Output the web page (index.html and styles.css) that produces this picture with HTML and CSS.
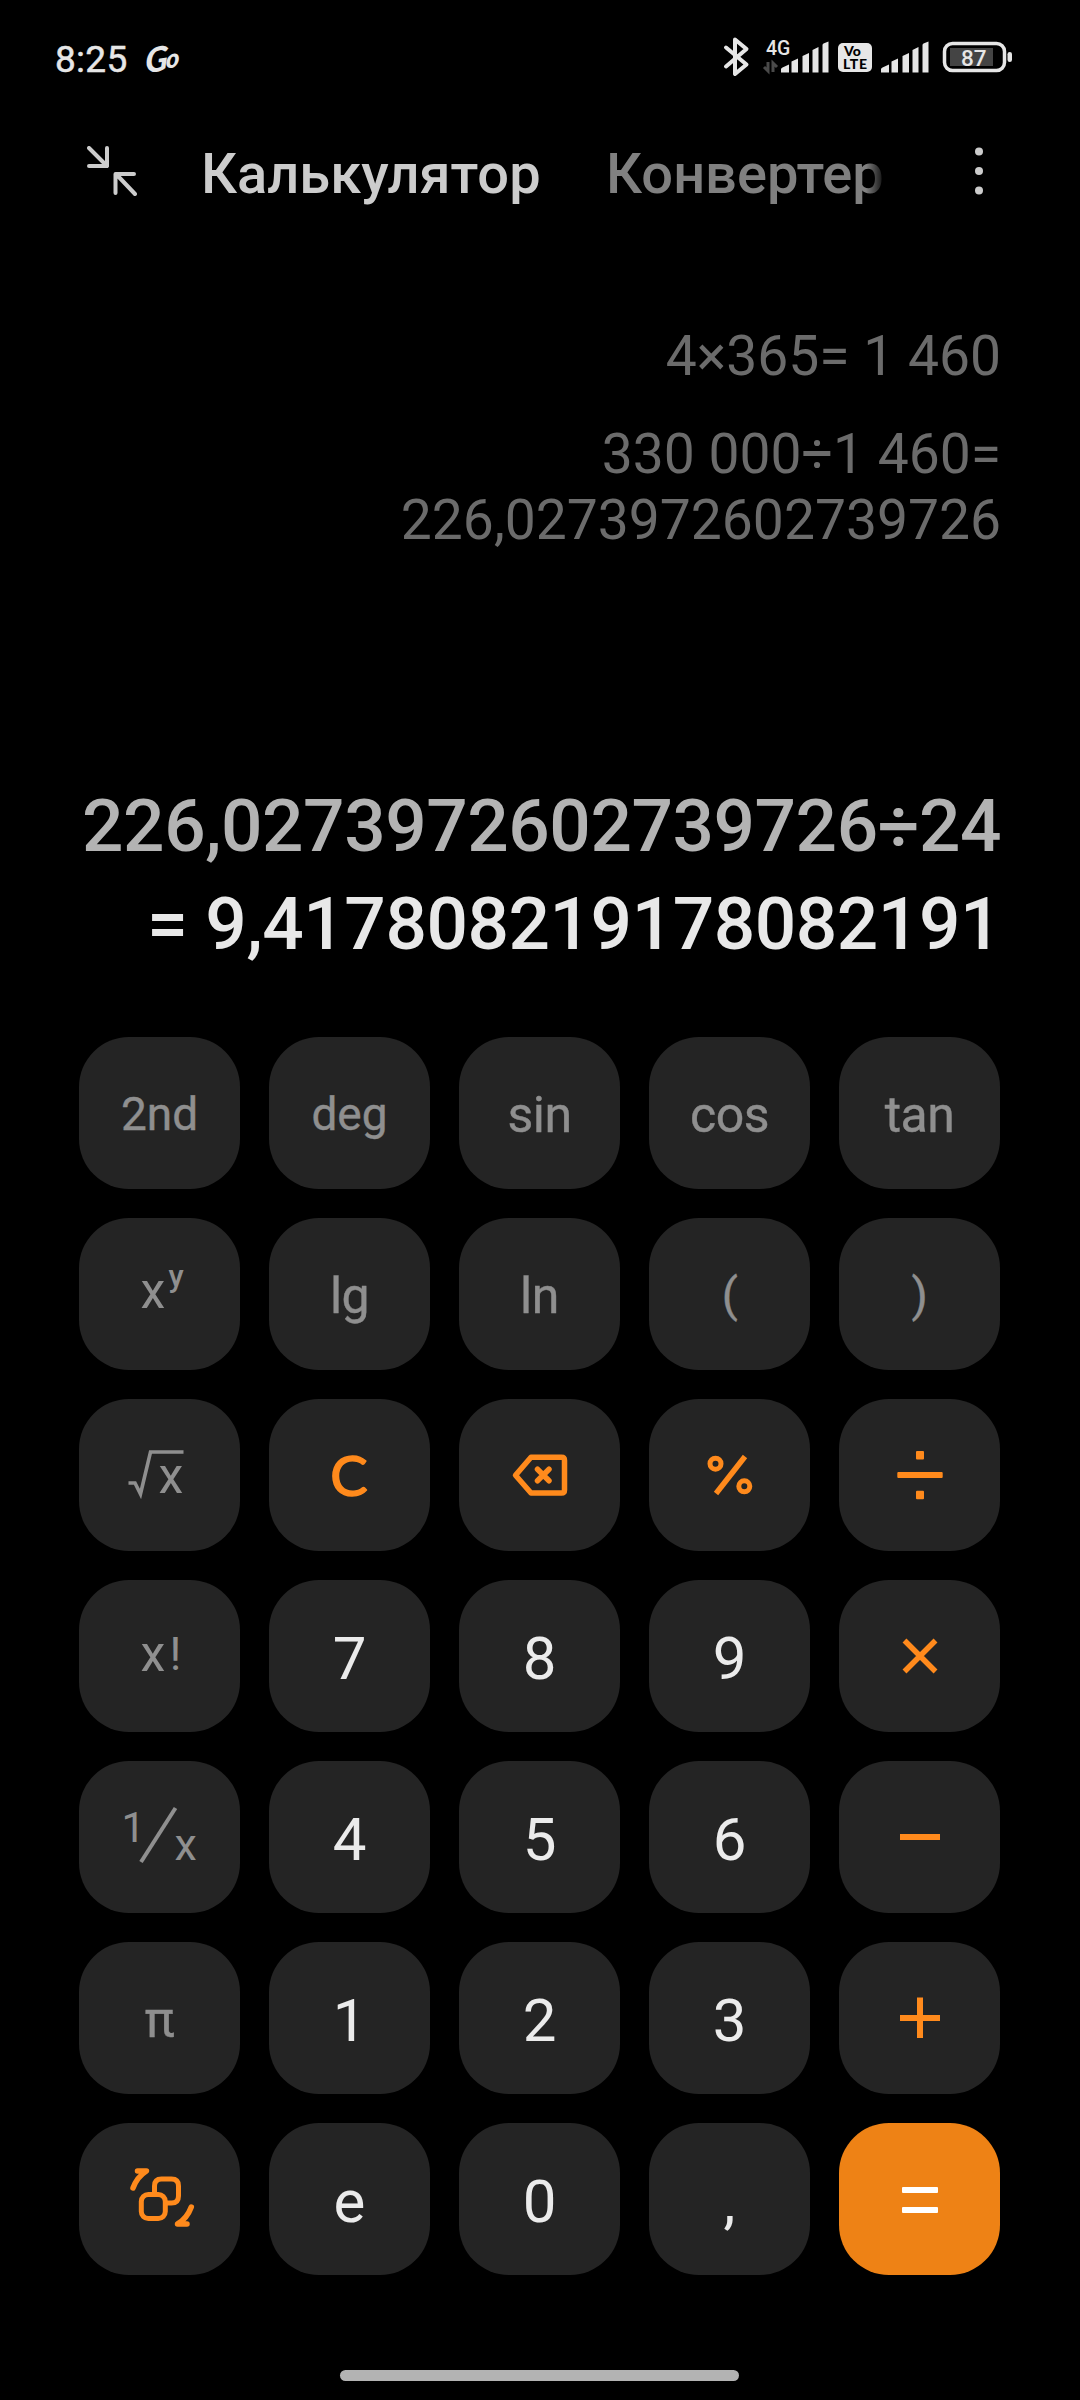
FILE: index.html
```html
<!DOCTYPE html>
<html lang="ru">
<head>
<meta charset="UTF-8">
<meta name="viewport" content="width=device-width,initial-scale=1">
<title>Калькулятор</title>
<link rel="stylesheet" href="styles.css">
</head>
<body>
<div class="screen">
  <div class="status">
    <span class="time">8:25</span>
    <svg class="go" width="48" height="50" viewBox="0 0 48 50">
      <g transform="rotate(-8 18 27) skewX(-10)">
        <text x="7" y="39" class="go-g">G</text>
        <text x="28" y="37" class="go-o">o</text>
      </g>
    </svg>
    <svg class="indicators" width="292" height="44" viewBox="722 35 292 44">
      <path class="bt" d="M726 47.500L746.500 64.500L735 74V39.500L746.500 49L726 66.500"/>
      <text x="766" y="55" class="net">4G</text>
      <path class="data" d="M768 62v9l-4-4M773 72v-9l4 4"/>
      <g id="bars" class="bars">
        <path d="M781 72.500v-3q0-1.500 1.500-2l6.500-3v8zM791.500 72.500V61.500l6.500-3v14zM802.500 72.500V56l6.500-3v19.500zM812.500 72.500V50l6-3v25.500zM822.500 72.500V45q0-1 1-1.500l5-2v31z"/>
      </g>
      <use href="#bars" x="100"/>
      <rect x="838" y="43" width="34" height="29" rx="5" class="bars"/>
      <text x="844" y="56" class="lte">Vo</text>
      <text x="843" y="69" class="lte" textLength="24">LTE</text>
      <rect x="944.500" y="43.500" width="60" height="27" rx="8" class="bat"/>
      <rect x="950" y="48" width="43" height="18" class="level"/>
      <rect x="1007.500" y="52" width="4.500" height="10" rx="2.200" class="bars"/>
      <text x="961" y="65.500" class="pct">87</text>
    </svg>
  </div>

  <div class="header">
    <svg class="collapse" width="50" height="50" viewBox="0 0 50 50">
      <path d="M2 2L20 20M20 2V20H2M48 48L29.500 28.500M28.500 47V28H47"/>
    </svg>
    <div class="tab active">Калькулятор</div>
    <div class="tab next">Конвертер</div>
    <svg class="more" width="10" height="48" viewBox="0 0 10 48">
      <circle cx="5" cy="4.500" r="4"/><circle cx="5" cy="24" r="4"/><circle cx="5" cy="43.500" r="4"/>
    </svg>
  </div>

  <div class="history">
    <div class="entry">4×365= 1 460</div>
    <div class="entry">330 000÷1 460=<br>226,0273972602739726</div>
  </div>

  <div class="current">
    <div class="expr">226,0273972602739726÷24</div>
    <div class="result">= 9,417808219178082191</div>
  </div>

  <div class="keypad">
    <div class="key fn small">2nd</div>
    <div class="key fn small">deg</div>
    <div class="key fn">sin</div>
    <div class="key fn">cos</div>
    <div class="key fn">tan</div>

    <div class="key"><svg viewBox="0 0 161 152"><text x="61.500" y="90" class="t50">x</text><text x="89.500" y="68.500" class="t30">y</text></svg></div>
    <div class="key fn">lg</div>
    <div class="key fn">ln</div>
    <div class="key fn paren">(</div>
    <div class="key fn paren">)</div>

    <div class="key"><svg viewBox="0 0 161 152"><path class="root" d="M49.500 84H56L61.500 95L71.500 53H104.500"/><text x="79.500" y="94.300" class="t50">x</text></svg></div>
    <div class="key"><svg viewBox="0 0 161 152"><text x="80" y="96.500" class="clear" text-anchor="middle">C</text></svg></div>
    <div class="key"><svg viewBox="0 0 161 152">
      <path class="op round" d="M72 58.300H102.500Q105.500 58.300 105.500 61.300V91Q105.500 94 102.500 94H72L56.500 76.200ZM78.500 70.200L90 81.800M90 70.200L78.500 81.800"/>
    </svg></div>
    <div class="key"><svg viewBox="0 0 161 152">
      <circle class="op sq" cx="66.500" cy="64.700" r="5.500"/><circle class="op sq" cx="95.300" cy="87.300" r="5.500"/>
      <path class="op" d="M96 57.500L67 94.500"/>
    </svg></div>
    <div class="key"><svg viewBox="0 0 161 152">
      <rect class="fill" x="58.300" y="73" width="45.400" height="6" rx="1"/>
      <rect class="fill" x="77" y="52" width="8" height="8.500" rx="1"/><rect class="fill" x="77" y="91.700" width="8" height="8.500" rx="1"/>
    </svg></div>

    <div class="key"><svg viewBox="0 0 161 152"><text x="61.500" y="90.700" class="t50">x</text><text x="90.500" y="90" class="t46">!</text></svg></div>
    <div class="key num">7</div>
    <div class="key num">8</div>
    <div class="key num">9</div>
    <div class="key"><svg viewBox="0 0 161 152"><path class="op" d="M65.500 60.500L96.500 91.500M96.500 60.500L65.500 91.500"/></svg></div>

    <div class="key"><svg viewBox="0 0 161 152">
      <text x="42.500" y="80.500" class="t42">1</text><path class="slash" d="M96.500 47L62 101"/><text x="95.500" y="98.500" class="t45">x</text>
    </svg></div>
    <div class="key num">4</div>
    <div class="key num">5</div>
    <div class="key num">6</div>
    <div class="key"><svg viewBox="0 0 161 152"><rect class="fill" x="61" y="73" width="40" height="6"/></svg></div>

    <div class="key fn">π</div>
    <div class="key num">1</div>
    <div class="key num">2</div>
    <div class="key num">3</div>
    <div class="key"><svg viewBox="0 0 161 152"><rect class="fill" x="61" y="73" width="40" height="6"/><rect class="fill" x="78" y="55.500" width="6" height="40.500"/></svg></div>

    <div class="key"><svg viewBox="0 0 161 152">
      <rect class="op sq" x="62.300" y="71.500" width="24" height="24" rx="7"/>
      <path class="op sq" d="M75.500 71V63Q75.500 56 82.500 56H92.500Q99.500 56 99.500 63V73Q99.500 80 92.500 80H87"/>
      <path class="op round" d="M58.500 48H67.500Q58 54 54 65M108 101H98.500Q108 95.500 112.300 84"/>
    </svg></div>
    <div class="key num">e</div>
    <div class="key num">0</div>
    <div class="key num">,</div>
    <div class="key equals"><svg viewBox="0 0 161 152"><rect x="63" y="64" width="36" height="6" rx="1"/><rect x="63" y="84" width="36" height="6" rx="1"/></svg></div>
  </div>

  <div class="homebar"></div>
</div>
</body>
</html>
```

FILE: styles.css
```css
:root{--key:#242424;--sub:#8f8f8f;--orange:#ff8a1c;--light:#e6e6e6}
*{box-sizing:border-box;margin:0;padding:0}
body{background:#000;font-family:Roboto,"Noto Sans",sans-serif}
.screen{width:1080px;height:2400px;overflow:hidden;display:flex;flex-direction:column}

/* status bar */
.status{height:114px;display:flex;align-items:center;padding:0 66px 0 55px}
.time{font-size:37px;color:var(--light);padding-top:4px;width:88px;letter-spacing:.3px;-webkit-text-stroke:.5px var(--light)}
.go{fill:var(--light);font-family:Lato,sans-serif;font-style:italic;font-weight:900}
.go-g{font-size:34px}
.go-o{font-size:26px}
.indicators{margin-left:auto}
.bars{fill:var(--light)}
.bt{fill:none;stroke:var(--light);stroke-width:4;stroke-linecap:round;stroke-linejoin:round}
.net{font-size:19.5px;font-weight:500;fill:var(--light)}
.data{fill:none;stroke:#4a4a4a;stroke-width:3}
.lte{font-family:Lato,sans-serif;font-size:14px;font-weight:900;fill:#000}
.bat{fill:none;stroke:var(--light);stroke-width:3.5}
.level{fill:#444}
.pct{font-size:22.5px;font-weight:500;fill:var(--light)}

/* header */
.header{height:120px;display:flex;align-items:center;padding:0 96px 0 87px}
.collapse{margin:-6px 64px 0 0;fill:none;stroke:#ccc;stroke-width:4;stroke-linecap:round;stroke-linejoin:round}
.tab{font-size:56px;line-height:66px;font-weight:500;white-space:nowrap}
.active{width:405px;color:#ccc}
.next{width:285px;color:#808080;-webkit-mask-image:linear-gradient(90deg,#000 260px,transparent 280px);mask-image:linear-gradient(90deg,#000 260px,transparent 280px)}
.more{margin:-6px 0 0 auto;fill:#ccc}

/* display */
.history{height:543px;padding:89px 79px 0;display:flex;flex-direction:column;gap:32px;text-align:right}
.entry{font-size:55.2px;line-height:66px;color:#6b6b6b}
.current{height:260px;padding-right:79px;text-align:right;font-size:73px;line-height:98px;font-weight:500;letter-spacing:-.45px;white-space:nowrap}
.expr{color:#b3b3b3}
.result{color:#e8e8e8}

/* keypad */
.keypad{display:grid;grid-template-columns:repeat(5,161px);grid-auto-rows:152px;gap:29px;padding-left:79px}
.key{background:var(--key);border-radius:50px;display:flex;align-items:center;justify-content:center}
.key svg{width:161px;height:152px;fill:var(--sub);flex:none}
.fn{font-size:50px;color:var(--sub);padding-top:4px;letter-spacing:-.5px;-webkit-text-stroke:.4px var(--sub)}
.small{font-size:46px;padding-top:1px;letter-spacing:0}
.paren{font-size:47px;padding-top:0}
.num{font-size:60px;color:#ebebeb;padding-top:5px}
.equals{background:#ee8215}
.equals svg{fill:#fff}
.t50{font-size:50px}
.t46{font-size:46px}
.t45{font-size:45px}
.t42{font-size:42px}
.t30{font-size:31px;font-weight:500}
.key .clear{font-family:Lato,sans-serif;font-size:56px;fill:var(--orange);stroke:var(--orange);stroke-width:1.5;stroke-linejoin:round}
.root,.slash{fill:none;stroke:var(--sub);stroke-width:3.6}
.slash{stroke-width:4}
.op{fill:none;stroke:var(--orange);stroke-width:5.5}
.round{stroke-linecap:round;stroke-linejoin:round}
.sq{stroke-width:5}
.fill{fill:var(--orange)}

.homebar{width:399px;height:11px;border-radius:6px;background:#b3b3b3;margin:95px 0 0 340px}
```
